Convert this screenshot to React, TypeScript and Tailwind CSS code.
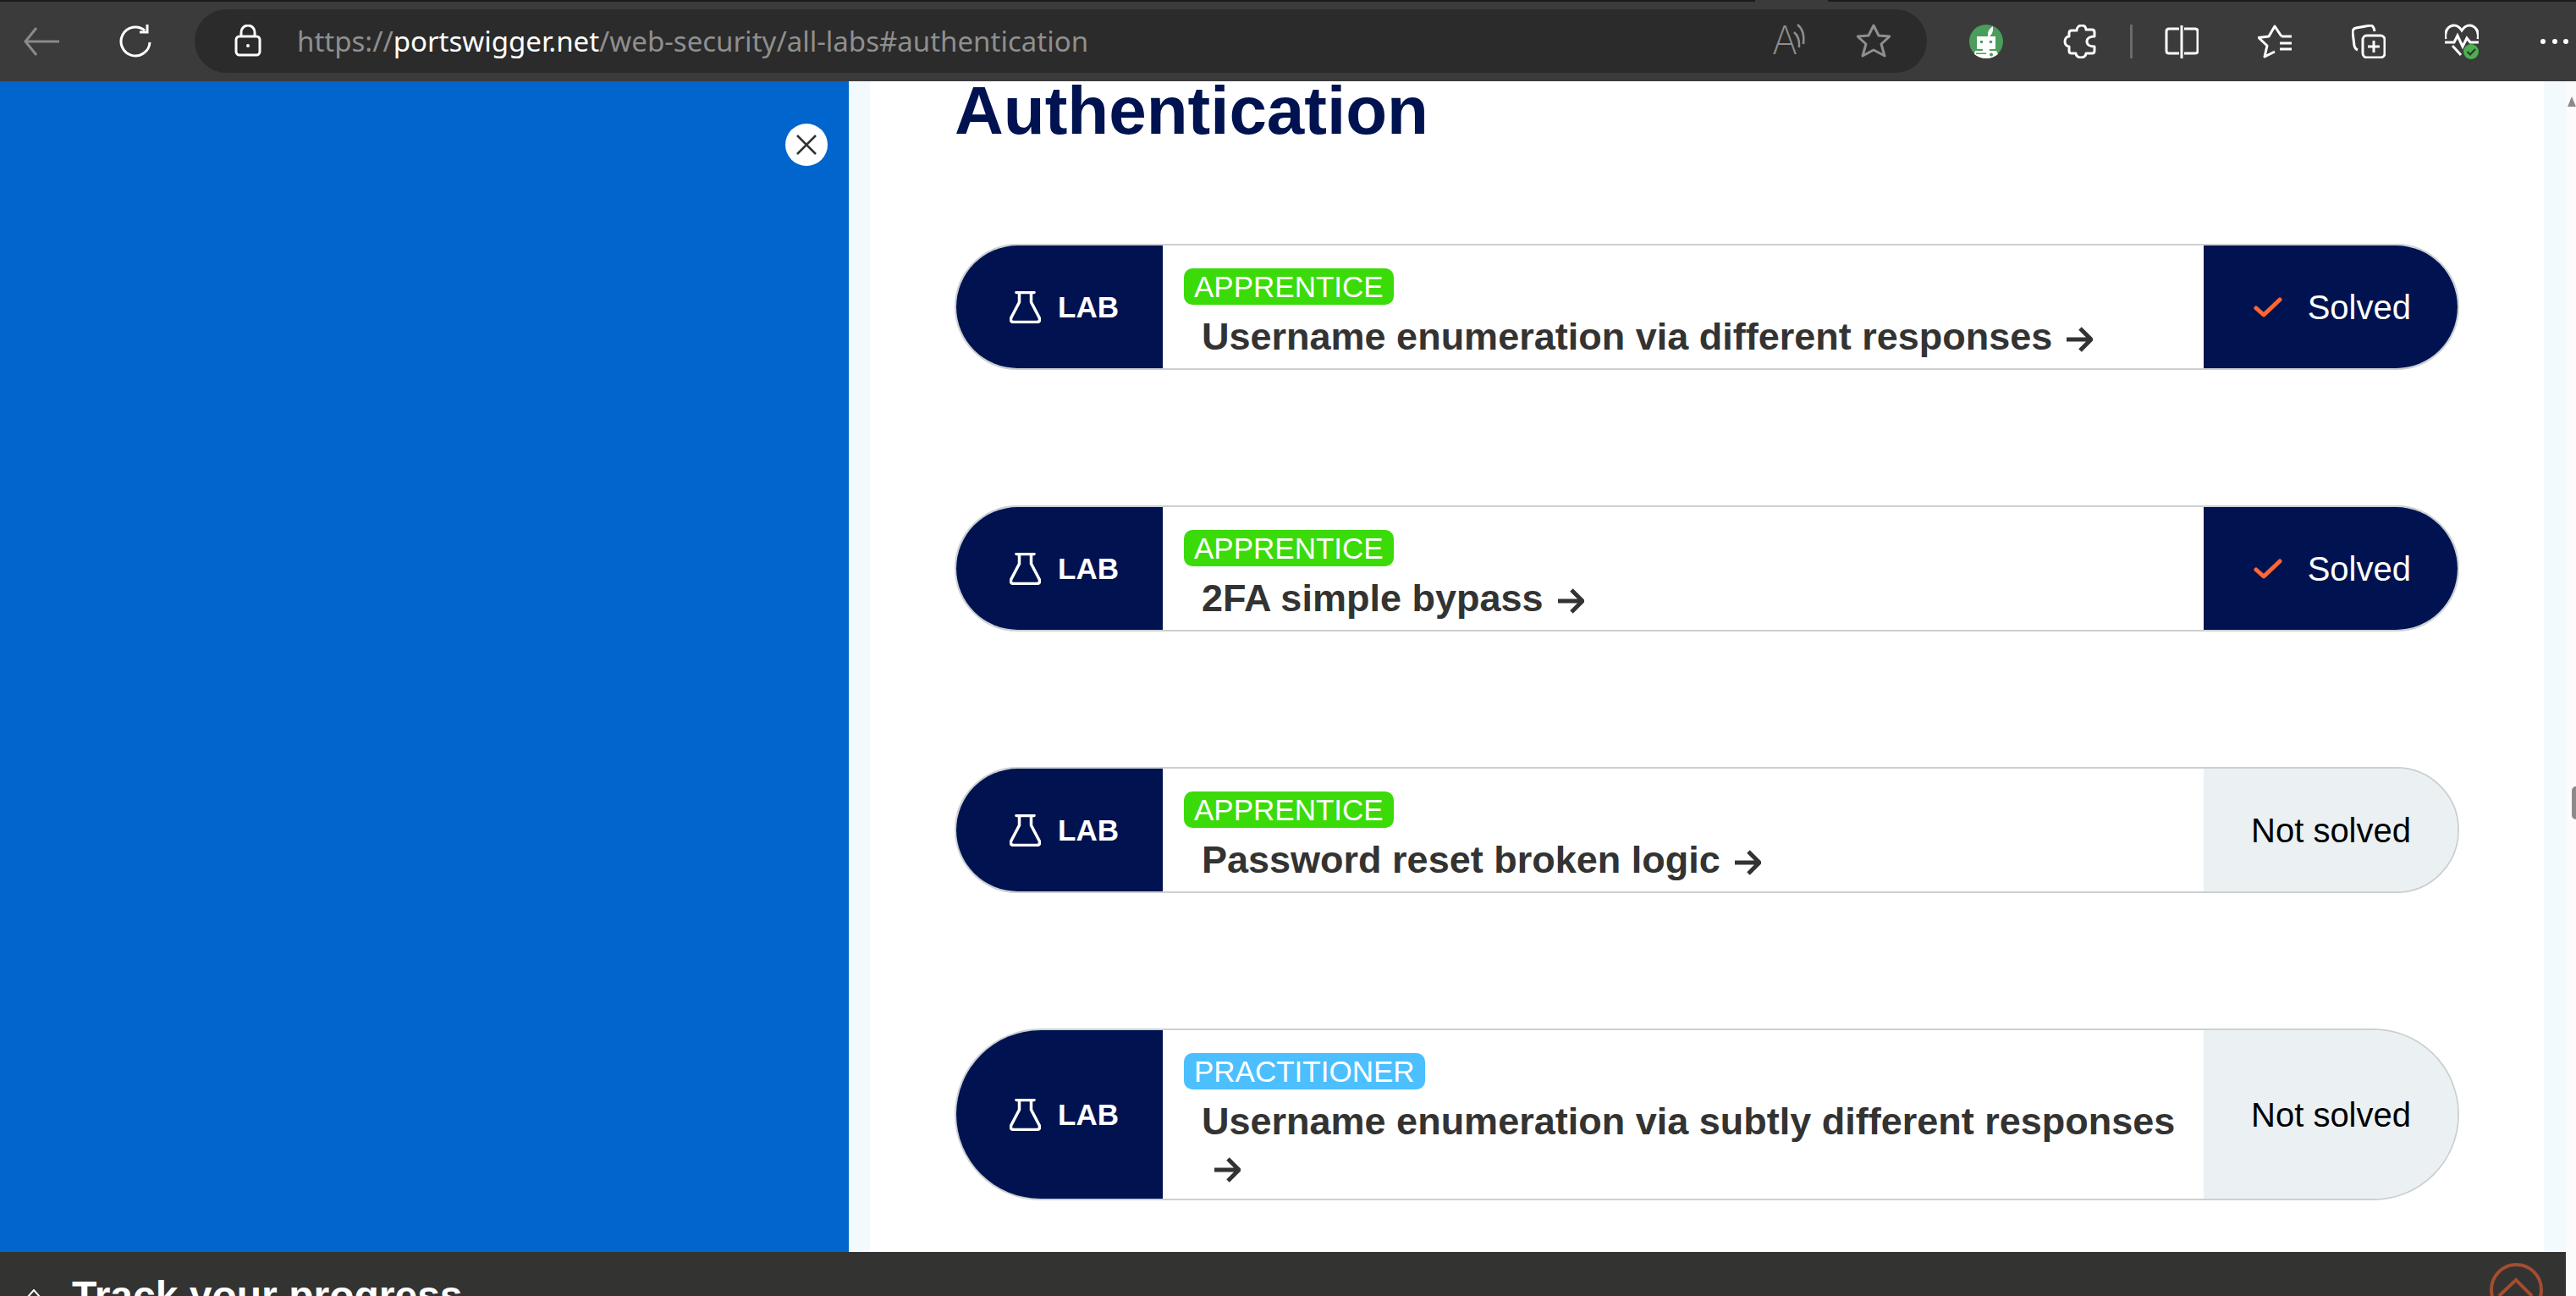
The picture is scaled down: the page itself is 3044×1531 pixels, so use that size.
import React from "react";

const sans = "font-['Liberation_Sans',Arial,sans-serif]";

function Back() {
  return (
    <svg viewBox="0 0 42 34" className="w-[42px] h-[34px]" fill="none" stroke="#8a8a8a" strokeWidth="3">
      <path d="M15 1 L2 17 L15 33 M2 17 H42" />
    </svg>
  );
}
function Reload() {
  return (
    <svg viewBox="0 0 40 40" className="w-[40px] h-[40px]" fill="none" stroke="#fff" strokeWidth="3">
      <path d="M32 7 A17 17 0 1 0 38 21" />
      <path d="M35 0 V9 H26" />
    </svg>
  );
}
function Lock() {
  return (
    <svg viewBox="0 0 32 38" className="w-[32px] h-[38px]" fill="none" stroke="#fff" strokeWidth="3">
      <path d="M8 14 V9 A8 8 0 0 1 24 9 V14" />
      <rect x="2" y="14" width="28" height="22" rx="4" />
      <circle cx="16" cy="25" r="2" fill="#fff" stroke="none" />
    </svg>
  );
}
function ReadAloud() {
  return (
    <div className="flex w-[40px] h-[40px] items-center relative">
      <span className="font-['Inter',sans-serif] font-extralight text-[46px] leading-none text-[#8f8f8f] -mt-[2px]">A</span>
      <svg viewBox="0 0 20 40" className="absolute left-[24px] top-0 w-[20px] h-[40px]" fill="none" stroke="#8f8f8f" strokeWidth="2.5">
        <path d="M2 10 Q9 16 8 28 M6 1 Q15 8 13 24" />
      </svg>
    </div>
  );
}
function StarOutline() {
  return (
    <svg viewBox="0 0 40 40" className="w-[40px] h-[40px]" fill="none" stroke="#8f8f8f" strokeWidth="3" strokeLinejoin="round">
      <path d="M20 2 L26 14 L39 15 L29 24 L33 38 L20 31 L7 38 L11 24 L1 15 L14 14 Z" />
    </svg>
  );
}
function Robot() {
  return (
    <svg viewBox="0 0 40 40" className="w-[40px] h-[40px]">
      <circle cx="20" cy="20" r="20" fill="#4a9d5b" />
      <path d="M22 14 Q21 6 28 2 Q29 10 24 14 Z" fill="#fff" />
      <rect x="9" y="14" width="22" height="15" fill="#fff" />
      <circle cx="14.5" cy="20.5" r="1.8" fill="#4a9d5b" />
      <circle cx="25.5" cy="20.5" r="1.8" fill="#4a9d5b" />
      <rect x="16" y="29" width="8" height="2" fill="#fff" />
      <path d="M7 31 H32 L34 35 Q28 40 20 40 Q12 40 6 35 Z" fill="#fff" />
      <circle cx="26" cy="35.5" r="2" fill="#4a9d5b" />
      <rect x="8" y="33.5" width="12" height="1.5" fill="#4a9d5b" />
    </svg>
  );
}
function Puzzle() {
  return (
    <svg viewBox="0 0 40 40" className="w-[40px] h-[40px]" fill="none" stroke="#fff" strokeWidth="3" strokeLinejoin="round">
      <path d="M11 7 H17 C17 3 20 1 23 1 C26 1 28 3 28 6 H35 Q38 6 38 9 V14 C33 14 29 16 29 20 C29 24 33 26 38 26 V31 Q38 34 35 34 H28 C28 37 25 39 22 39 C19 39 16 37 16 34 H11 Q8 34 8 31 V26 C5 26 3 23 3 20 C3 17 5 14 8 14 V10 Q8 7 11 7 Z" />
    </svg>
  );
}
function Split() {
  return (
    <svg viewBox="0 0 40 40" className="w-[40px] h-[40px]" fill="none" stroke="#fff" strokeWidth="3">
      <path d="M17 5 H5 Q2 5 2 8 V31 Q2 34 5 34 H17" />
      <path d="M23 5 H36 Q39 5 39 8 V31 Q39 34 36 34 H23" />
      <path d="M20 1 V40" />
    </svg>
  );
}
function Favs() {
  return (
    <svg viewBox="0 0 40 40" className="w-[40px] h-[40px]" fill="none" stroke="#fff" strokeWidth="3" strokeLinejoin="round">
      <path d="M28 14 L20 2 L13 14 L1 15.5 L11 25 L8 38 L20 32" />
      <path d="M28 14 H40 M26 22 H40 M26 29 H40" />
    </svg>
  );
}
function Collections() {
  return (
    <svg viewBox="0 0 40 40" className="w-[40px] h-[40px]" fill="none" stroke="#fff" strokeWidth="3">
      <path d="M7 30 Q4 29 3 25 L1 9 Q1 5 5 4 L22 1 Q26 1 27 8" />
      <rect x="13" y="13" width="26" height="26" rx="5" />
      <path d="M26 19 V33 M19 26 H33" />
    </svg>
  );
}
function Health() {
  return (
    <svg viewBox="0 0 40 42" className="w-[40px] h-[42px]" fill="none" stroke="#fff" strokeWidth="3">
      <path d="M1 18 C-1 8 5 2 11 2 C15 2 18 5 20 8 C22 5 25 2 29 2 C35 2 41 8 39 18" />
      <path d="M0 22 H11 L15 14 L21 27 L26 17 L30 22 H40" />
      <path d="M9 26 L19 37" />
      <circle cx="31" cy="33" r="9" fill="#4caf50" stroke="none" />
      <path d="M26.5 33 L30 36.5 L36 30" stroke="#333" strokeWidth="2" />
    </svg>
  );
}
function Dots() {
  return (
    <svg viewBox="0 0 40 8" className="w-[40px] h-[8px]" fill="#fff">
      <circle cx="6" cy="4" r="3" />
      <circle cx="20" cy="4" r="3" />
      <circle cx="33" cy="4" r="3" />
    </svg>
  );
}
function Flask() {
  return (
    <svg viewBox="0 0 37 38" className="w-[37px] h-[38px]" fill="none" stroke="#fff" strokeWidth="3.5" strokeLinecap="round" strokeLinejoin="round">
      <path d="M8 1.5 H29 M11.5 1.5 V13 L2 31 Q0 36.5 5 36.5 H32 Q37 36.5 35 31 L25.5 13 V1.5" />
    </svg>
  );
}
function Check() {
  return (
    <svg viewBox="0 0 34 24" className="w-[34px] h-[24px]" fill="none" stroke="#ff6633" strokeWidth="5" strokeLinecap="round" strokeLinejoin="round">
      <path d="M3 13 L12 21 L31 3" />
    </svg>
  );
}
function Arrow({ wrapped }: { wrapped?: boolean }) {
  return (
    <svg
      viewBox="0 0 32 30"
      className={wrapped ? "inline-block w-[32px] h-[30px] ml-[14px] align-[-3px]" : "inline-block w-[32px] h-[30px] ml-[16px] align-[-3px]"}
      fill="none"
      stroke="#333332"
      strokeWidth="5"
    >
      <path d="M1 15 H29 M17 2 L30 15 L17 28" />
    </svg>
  );
}

type Lab = { level: string; title: string; solved: boolean; wrap?: boolean };

const labs: Lab[] = [
  { level: "APPRENTICE", title: "Username enumeration via different responses", solved: true },
  { level: "APPRENTICE", title: "2FA simple bypass", solved: true },
  { level: "APPRENTICE", title: "Password reset broken logic", solved: false },
  { level: "PRACTITIONER", title: "Username enumeration via subtly different responses", solved: false, wrap: true },
];

function LabRow({ lab }: { lab: Lab }) {
  return (
    <div className="flex w-full rounded-full border-2 border-[#cbd0d1] overflow-hidden bg-white">
      <div className="w-[244px] shrink-0 bg-[#001350] flex items-center pl-[63px] gap-[20px]">
        <Flask />
        <span className={`${sans} font-bold text-[35px] leading-none text-white`}>LAB</span>
      </div>
      <div className="flex-1 min-w-0 flex flex-col items-start pt-[27px] pb-[10px]">
        <span
          className={
            lab.level === "APPRENTICE"
              ? `${sans} ml-[25px] h-[43px] px-[12px] rounded-[10px] bg-[#3bdb0a] text-white text-[35px] leading-[43px]`
              : `${sans} ml-[25px] h-[43px] px-[12px] rounded-[10px] bg-[#4cbfff] text-white text-[35px] leading-[43px]`
          }
        >
          {lab.level}
        </span>
        <div className={`${sans} pl-[46px] mt-[11px] font-bold text-[45px] leading-[54px] text-[#333332]`}>
          {lab.title}
          <Arrow wrapped={lab.wrap} />
        </div>
      </div>
      <div
        className={
          lab.solved
            ? "w-[300px] shrink-0 bg-[#001350] flex items-center justify-end pr-[55px] gap-[30px]"
            : "w-[300px] shrink-0 bg-[#ebf0f2] flex items-center justify-end pr-[55px]"
        }
      >
        {lab.solved && <Check />}
        <span className={lab.solved ? `${sans} text-[40px] leading-none text-white` : `${sans} text-[40px] leading-none text-black`}>
          {lab.solved ? "Solved" : "Not solved"}
        </span>
      </div>
    </div>
  );
}

export default function App() {
  return (
    <div className="w-[3044px] h-[1531px] overflow-hidden flex flex-col bg-white">
      <div className="h-[2px] shrink-0 bg-[#1c1c1c] flex">
        <div className="ml-[2074px] w-[86px] bg-[#3b3b3b]" />
      </div>
      <div className="h-[94px] shrink-0 bg-[#3b3b3b] flex items-center">
        <div className="ml-[28px] flex"><Back /></div>
        <div className="ml-[69px] flex"><Reload /></div>
        <div className="ml-[51px] w-[2047px] h-[75px] rounded-full bg-[#2b2b2b] flex items-center -mt-[2px]">
          <div className="ml-[47px] flex"><Lock /></div>
          <div className="ml-[42px] font-['Noto_Sans',sans-serif] text-[33px] leading-none text-[#8f8f8f] whitespace-nowrap">
            https://<span className="text-white">portswigger.net</span>/web-security/all-labs#authentication
          </div>
          <div className="ml-auto flex items-center gap-[60px] mr-[43px]">
            <ReadAloud />
            <StarOutline />
          </div>
        </div>
        <div className="ml-[50px] flex"><Robot /></div>
        <div className="ml-[70px] flex"><Puzzle /></div>
        <div className="ml-[40px] w-[3px] h-[40px] bg-[#6b6b6b]" />
        <div className="ml-[38px] flex"><Split /></div>
        <div className="ml-[70px] flex"><Favs /></div>
        <div className="ml-[71px] flex"><Collections /></div>
        <div className="ml-[70px] flex"><Health /></div>
        <div className="ml-[70px] flex"><Dots /></div>
      </div>
      <div className="flex-1 min-h-0 flex">
        <div className="w-[3032px] shrink-0 flex flex-col">
          <div className="h-[1383px] shrink-0 flex overflow-hidden">
            <div className="w-[1003px] shrink-0 bg-[#0065cc] flex justify-end items-start pr-[25px] pt-[50px]">
              <div className="w-[50px] h-[50px] rounded-full bg-white flex items-center justify-center">
                <svg viewBox="0 0 24 24" className="w-[24px] h-[24px]" fill="none" stroke="#333332" strokeWidth="2.5">
                  <path d="M1 1 L23 23 M23 1 L1 23" />
                </svg>
              </div>
            </div>
            <div className="w-[25px] shrink-0 bg-[#f2fafd]" />
            <div className="flex-1 min-w-0 pl-[100px] pr-[100px]">
              <h1 className={`${sans} font-bold text-[80px] leading-[62px] text-[#001350] mt-[4px] whitespace-nowrap`}>Authentication</h1>
              <div className="mt-[126px] flex flex-col gap-[160px]">
                {labs.map((lab) => (
                  <LabRow key={lab.title} lab={lab} />
                ))}
              </div>
            </div>
            <div className="w-[26px] shrink-0 bg-[#f2fafd]" />
          </div>
          <div className="flex-1 min-h-0 bg-[#333332] flex overflow-hidden">
            <div className="ml-[32px] mt-[44px] flex">
              <svg viewBox="0 0 16 10" className="w-[16px] h-[10px]" fill="none" stroke="#fff" strokeWidth="2">
                <path d="M1 9 L8 1 L15 9" />
              </svg>
            </div>
            <div className={`${sans} ml-[37px] mt-[22px] font-bold text-[48px] leading-[60px] text-white whitespace-nowrap`}>
              Track your progress
            </div>
            <div className="ml-auto mr-[27px] mt-[13px] flex shrink-0">
              <svg viewBox="0 0 63 63" className="w-[63px] h-[63px]" fill="none" stroke="#a34e30" strokeWidth="4">
                <circle cx="31.5" cy="31.5" r="29.5" />
                <path d="M11 39 L31 20 L50 39" />
              </svg>
            </div>
          </div>
        </div>
        <div className="flex-1 min-w-0 bg-[#fbfbfb] flex flex-col items-end overflow-hidden">
          <div className="mt-[18px] w-0 h-0 border-l-[5px] border-r-[5px] border-b-[12px] border-l-transparent border-r-transparent border-b-[#8a8a8a]" />
          <div className="mt-[803px] w-[5px] h-[39px] bg-[#8a8a8a] rounded-l-[5px]" />
        </div>
      </div>
    </div>
  );
}
